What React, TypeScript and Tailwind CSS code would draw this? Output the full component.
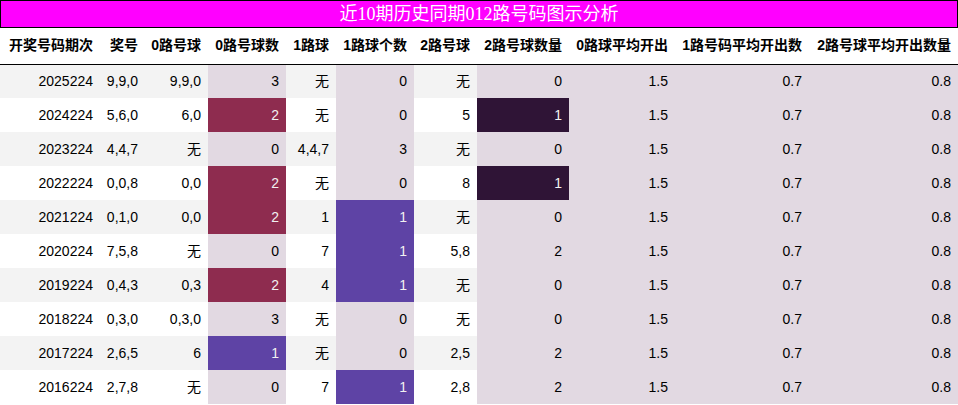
type Row = string[];

const headers = [
  "开奖号码期次",
  "奖号",
  "0路号球",
  "0路号球数",
  "1路球",
  "1路球个数",
  "2路号球",
  "2路号球数量",
  "0路球平均开出",
  "1路号码平均开出数",
  "2路号球平均开出数量",
];

const widths = [
  "w-[100px]",
  "w-[45px]",
  "w-[63px]",
  "w-[78px]",
  "w-[50px]",
  "w-[78px]",
  "w-[63px]",
  "w-[92px]",
  "w-[106px]",
  "w-[134px]",
  "w-[149px]",
];

const rows: Row[] = [
  ["2025224", "9,9,0", "9,9,0", "3", "无", "0", "无", "0", "1.5", "0.7", "0.8"],
  ["2024224", "5,6,0", "6,0", "2", "无", "0", "5", "1", "1.5", "0.7", "0.8"],
  ["2023224", "4,4,7", "无", "0", "4,4,7", "3", "无", "0", "1.5", "0.7", "0.8"],
  ["2022224", "0,0,8", "0,0", "2", "无", "0", "8", "1", "1.5", "0.7", "0.8"],
  ["2021224", "0,1,0", "0,0", "2", "1", "1", "无", "0", "1.5", "0.7", "0.8"],
  ["2020224", "7,5,8", "无", "0", "7", "1", "5,8", "2", "1.5", "0.7", "0.8"],
  ["2019224", "0,4,3", "0,3", "2", "4", "1", "无", "0", "1.5", "0.7", "0.8"],
  ["2018224", "0,3,0", "0,3,0", "3", "无", "0", "无", "0", "1.5", "0.7", "0.8"],
  ["2017224", "2,6,5", "6", "1", "无", "0", "2,5", "2", "1.5", "0.7", "0.8"],
  ["2016224", "2,7,8", "无", "0", "7", "1", "2,8", "2", "1.5", "0.7", "0.8"],
];

// twilight-style gradient colours per count column
function countCell(col: number, value: string): string {
  if (col === 3) {
    if (value === "2") return "bg-[#8e2c4f] text-[#f1f1f1]";
    if (value === "1") return "bg-[#5e43a5] text-[#f1f1f1]";
    return "bg-[#e2d9e2] text-black";
  }
  if (col === 5) {
    if (value === "1") return "bg-[#5e43a5] text-[#f1f1f1]";
    return "bg-[#e2d9e2] text-black";
  }
  if (col === 7) {
    if (value === "1") return "bg-[#2f1436] text-[#f1f1f1]";
    return "bg-[#e2d9e2] text-black";
  }
  if (col >= 8) return "bg-[#e2d9e2] text-black";
  return "text-black";
}

export default function App() {
  return (
    <div className="w-[958px] h-[405px] overflow-hidden bg-white font-['Liberation_Sans','Noto_Sans_CJK_SC',sans-serif]">
      <div className="h-[28px] border border-black bg-[#ff00ff] text-center text-[18px] leading-[26px] text-white font-['Liberation_Serif','Noto_Sans_CJK_SC',serif]">
        近10期历史同期012路号码图示分析
      </div>
      <table className="table-fixed border-collapse w-[958px] text-[14px]">
        <thead>
          <tr className="h-[36px] border-b border-black">
            {headers.map((h, i) => (
              <th key={h} className={`${widths[i]} p-0 pr-[7px] text-right font-bold text-black whitespace-nowrap`}>
                {h}
              </th>
            ))}
          </tr>
        </thead>
        <tbody>
          {rows.map((r, ri) => (
            <tr key={r[0]} className={`h-[34px] ${ri % 2 === 0 ? "bg-[#f3f3f3]" : "bg-white"}`}>
              {r.map((v, ci) => (
                <td key={ci} className={`p-0 pr-[7px] text-right whitespace-nowrap ${countCell(ci, v)}`}>
                  {v}
                </td>
              ))}
            </tr>
          ))}
        </tbody>
      </table>
    </div>
  );
}
